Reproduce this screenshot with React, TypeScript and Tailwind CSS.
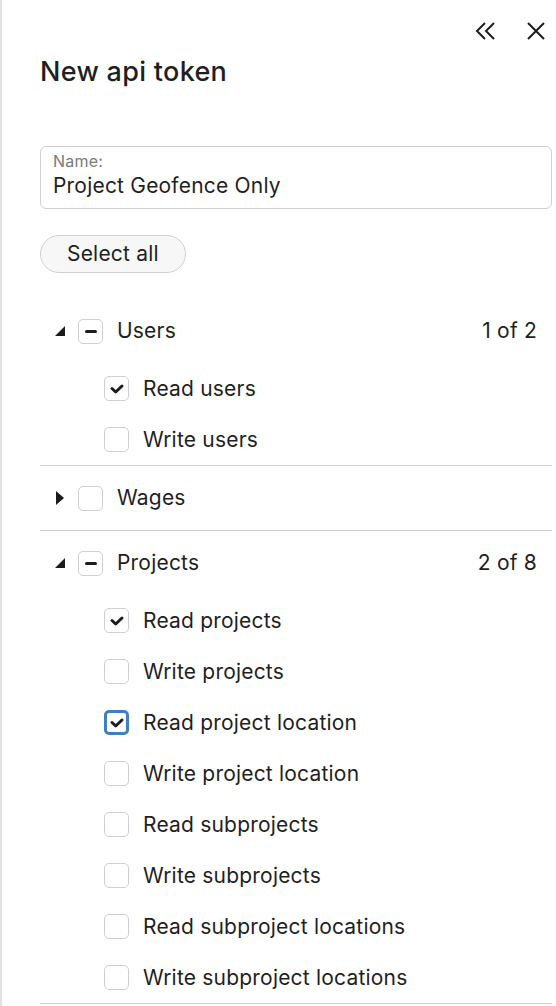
import { useState } from 'react'

type Perm = { label: string; checked: boolean; focused?: boolean }
type Group = { name: string; open: boolean; perms: Perm[] }

const groups: Group[] = [
  {
    name: 'Users',
    open: true,
    perms: [
      { label: 'Read users', checked: true },
      { label: 'Write users', checked: false },
    ],
  },
  { name: 'Wages', open: false, perms: [] },
  {
    name: 'Projects',
    open: true,
    perms: [
      { label: 'Read projects', checked: true },
      { label: 'Write projects', checked: false },
      { label: 'Read project location', checked: true, focused: true },
      { label: 'Write project location', checked: false },
      { label: 'Read subprojects', checked: false },
      { label: 'Write subprojects', checked: false },
      { label: 'Read subproject locations', checked: false },
      { label: 'Write subproject locations', checked: false },
    ],
  },
]

function Box({ state, focused }: { state: 'on' | 'off' | 'some'; focused?: boolean }) {
  return (
    <span
      className={`flex h-[25px] w-[25px] shrink-0 items-center justify-center rounded-[5px] bg-white ${
        focused ? 'border-[3px] border-[#3f7fc6]' : 'border border-[#cfcfcf]'
      }`}
    >
      {state === 'on' && (
        <svg width="16" height="16" viewBox="0 0 16 16">
          <path d="M3 7.5 L6.7 11 L13 5" fill="none" stroke="#1c1c1c" strokeWidth="3" strokeLinecap="round" strokeLinejoin="round" />
        </svg>
      )}
      {state === 'some' && <span className="h-[3px] w-[12px] rounded-sm bg-[#1c1c1c]" />}
    </span>
  )
}

export default function App() {
  const [name] = useState('Project Geofence Only')

  return (
    <div
      className="h-[1006px] w-[556px] overflow-hidden border-l-2 border-[#e2e2e2] bg-white pl-[38px] pr-[4px] text-[#1f1f1f] tracking-[0.2px]"
      style={{ fontFamily: 'Inter, "Open Sans", sans-serif' }}
    >
      <div className="flex h-[52px] items-end justify-end gap-[30px] pb-[12px] pr-[7px]">
        <svg width="22" height="18" viewBox="0 0 22 18">
          <path d="M10 1 L2 9 L10 17 M19 1 L11 9 L19 17" fill="none" stroke="#1c1c1c" strokeWidth="2" />
        </svg>
        <svg width="18" height="18" viewBox="0 0 18 18">
          <path d="M1 1 L17 17 M17 1 L1 17" fill="none" stroke="#1c1c1c" strokeWidth="2" />
        </svg>
      </div>

      <h1 className="text-[27px] font-medium leading-[40px] tracking-[0.3px]">New api token</h1>

      <div className="mt-[54px] h-[63px] rounded-[6px] border border-[#d0d0d0] px-[12px] pt-[4px]">
        <div className="text-[16px] leading-[20px] text-[#7a7a7a]">Name:</div>
        <div className="text-[21px] leading-[29px]">{name}</div>
      </div>

      <button className="mt-[26px] h-[38px] rounded-full border border-[#d0d0d0] bg-[#f7f7f7] px-[26px] text-[21px]">
        Select all
      </button>

      <div className="mt-[26px]">
        {groups.map((g) => {
          const n = g.perms.filter((p) => p.checked).length
          const state = n === 0 ? 'off' : n === g.perms.length ? 'on' : 'some'
          return (
            <div key={g.name} className="border-b border-[#cfcfcf]">
              <div className="flex h-[64px] items-center">
                <span className="flex w-[38px] justify-center pl-[2px]">
                  {g.open ? (
                    <svg width="10" height="10" viewBox="0 0 10 10">
                      <path d="M10 0 L10 10 L0 10 Z" fill="#1c1c1c" />
                    </svg>
                  ) : (
                    <svg width="8" height="14" viewBox="0 0 8 14">
                      <path d="M0 0 L8 7 L0 14 Z" fill="#1c1c1c" />
                    </svg>
                  )}
                </span>
                <Box state={state} />
                <span className="ml-[14px] text-[21px]">{g.name}</span>
                {g.open && (
                  <span className="ml-auto pr-[15px] text-[21px]">
                    {n} of {g.perms.length}
                  </span>
                )}
              </div>
              {g.open &&
                g.perms.map((p) => (
                  <div key={p.label} className="flex h-[51px] items-center pl-[64px]">
                    <Box state={p.checked ? 'on' : 'off'} focused={p.focused} />
                    <span className="ml-[14px] text-[21px]">{p.label}</span>
                  </div>
                ))}
            </div>
          )
        })}
      </div>
    </div>
  )
}
